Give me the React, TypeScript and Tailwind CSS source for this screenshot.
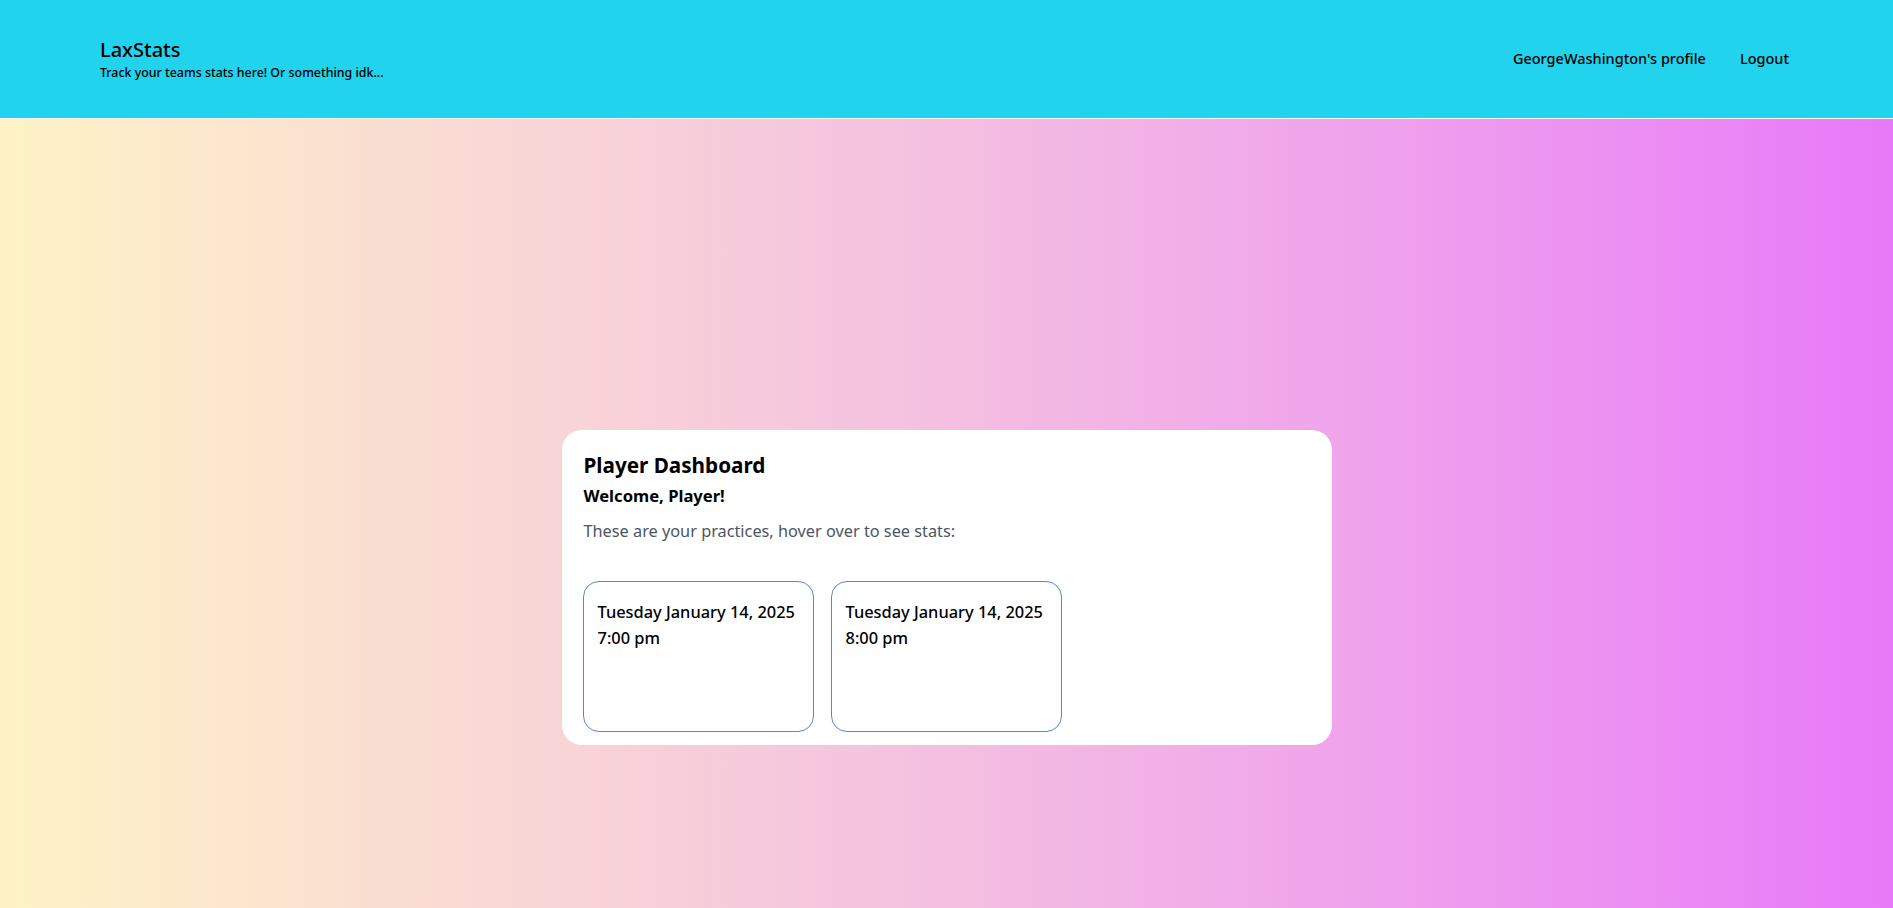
const practices = [
  {date: 'Tuesday January 14, 2025', time: '7:00 pm'},
  {date: 'Tuesday January 14, 2025', time: '8:00 pm'},
]

export default function App() {
  return (
    <div className="min-h-screen flex flex-col font-['Noto_Sans',sans-serif] text-black">
      {/* Header */}
      <header className="h-[119px] bg-[#22d3ee] border-b border-white flex items-center justify-between px-[100px]">
        <div className="flex flex-col">
          <h1 className="text-[20px] leading-[26px] font-medium">LaxStats</h1>
          <p className="text-[12.4px] leading-[16px] font-medium mt-[2px]">Track your teams stats here! Or something idk...</p>
        </div>
        <nav className="flex items-center gap-[34px] text-[14.5px] font-medium pr-[4px]">
          <a href="#">GeorgeWashington's profile</a>
          <a href="#">Logout</a>
        </nav>
      </header>

      {/* Main */}
      <main className="flex-1 bg-gradient-to-r from-[#fef3c6] via-[#f4bfe0] to-[#e879f9] flex justify-center pt-[311px] pb-[163px]">
        <div className="w-[770px] h-[315px] bg-white rounded-[20px] pt-[20px] px-[22px] pb-[14px] flex flex-col">
          <h2 className="text-[20.7px] leading-[30px] font-bold">Player Dashboard</h2>
          <h3 className="text-[16.6px] leading-[24px] font-bold mt-[4px]">Welcome, Player!</h3>
          <p className="text-[16.3px] leading-[26px] text-gray-600 mt-[10px]">These are your practices, hover over to see stats:</p>

          <div className="flex gap-[17px] mt-[37px] -ml-[1px]">
            {practices.map((p, i) => (
              <div key={i} className="w-[231px] h-[151px] border border-[#5b86d4] rounded-2xl px-[14px] pt-[17px]">
                <p className="text-[16.4px] leading-[26px] font-medium whitespace-nowrap">{p.date}</p>
                <p className="text-[16.4px] leading-[26px] font-medium">{p.time}</p>
              </div>
            ))}
          </div>
        </div>
      </main>
    </div>
  )
}
